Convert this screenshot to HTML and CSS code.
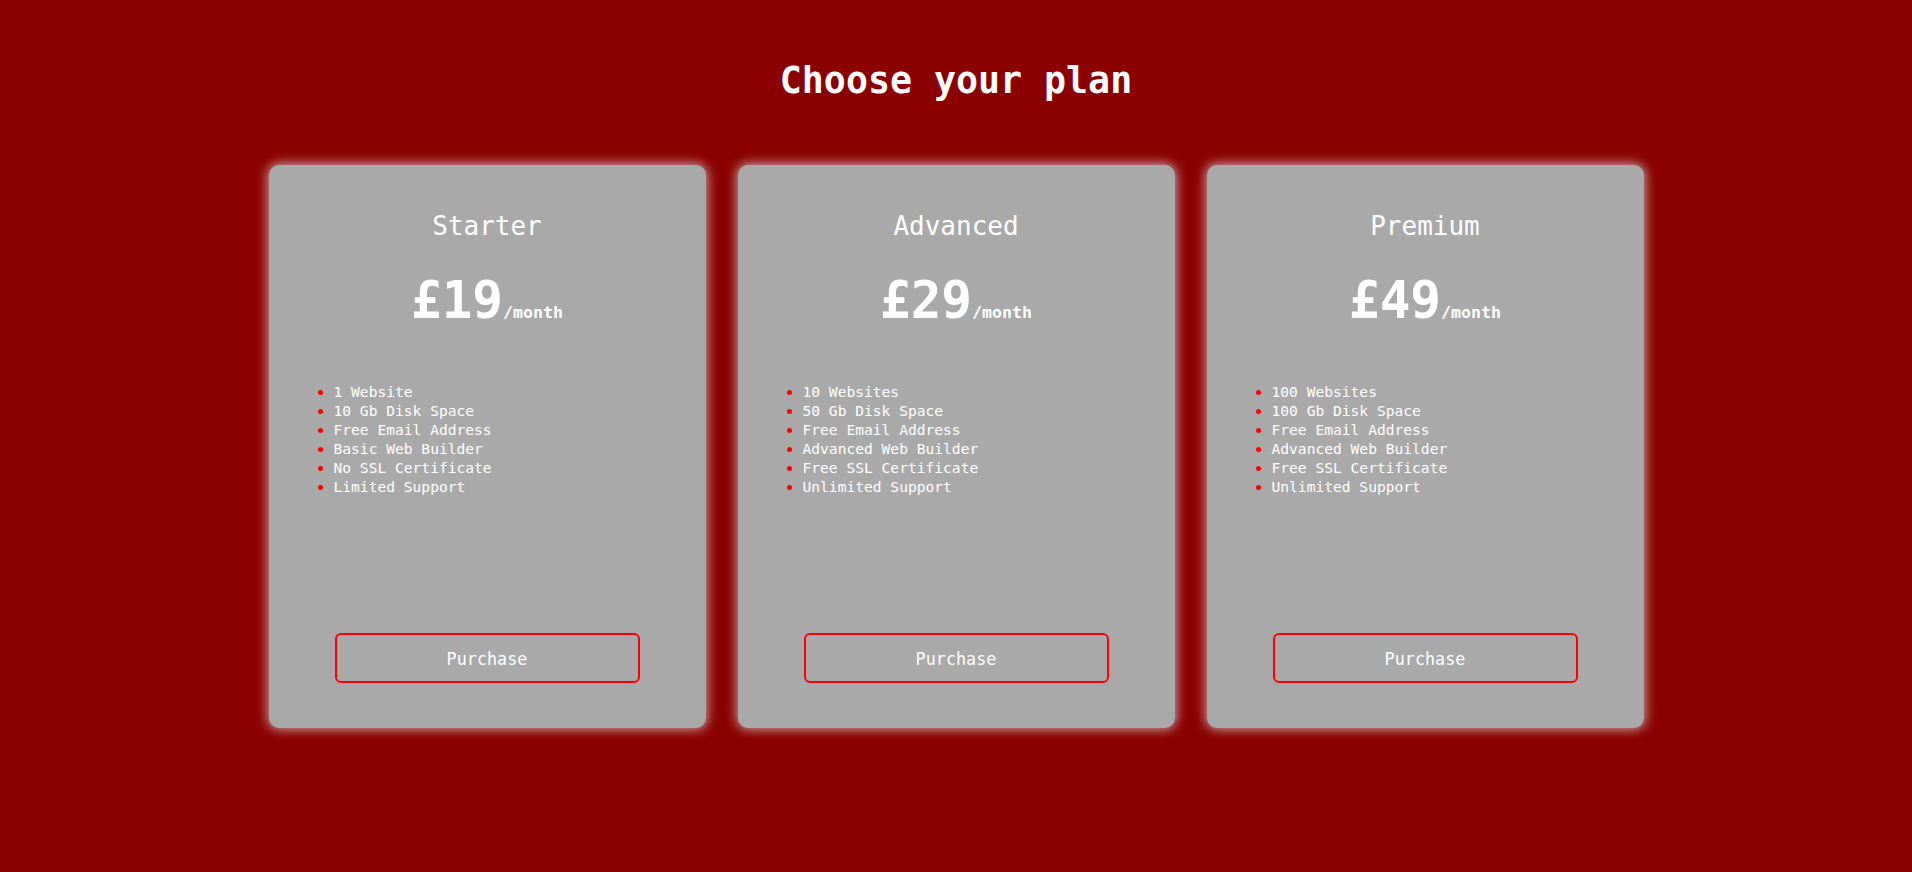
FILE: index.html
```html
<!DOCTYPE html>
<html lang="en">
<head>
<meta charset="utf-8">
<title>Choose your plan</title>
<link rel="stylesheet" href="styles.css">
</head>
<body>
<main class="page">
  <h1 class="title">Choose your plan</h1>
  <section class="plans">
    <article class="card">
      <h2 class="plan-name">Starter</h2>
      <p class="price">£19<span class="per">/month</span></p>
      <ul class="features">
        <li>1 Website</li>
        <li>10 Gb Disk Space</li>
        <li>Free Email Address</li>
        <li>Basic Web Builder</li>
        <li>No SSL Certificate</li>
        <li>Limited Support</li>
      </ul>
      <button class="buy">Purchase</button>
    </article>
    <article class="card">
      <h2 class="plan-name">Advanced</h2>
      <p class="price">£29<span class="per">/month</span></p>
      <ul class="features">
        <li>10 Websites</li>
        <li>50 Gb Disk Space</li>
        <li>Free Email Address</li>
        <li>Advanced Web Builder</li>
        <li>Free SSL Certificate</li>
        <li>Unlimited Support</li>
      </ul>
      <button class="buy">Purchase</button>
    </article>
    <article class="card">
      <h2 class="plan-name">Premium</h2>
      <p class="price">£49<span class="per">/month</span></p>
      <ul class="features">
        <li>100 Websites</li>
        <li>100 Gb Disk Space</li>
        <li>Free Email Address</li>
        <li>Advanced Web Builder</li>
        <li>Free SSL Certificate</li>
        <li>Unlimited Support</li>
      </ul>
      <button class="buy">Purchase</button>
    </article>
  </section>
</main>
</body>
</html>
```
FILE: styles.css
```css
html, body {
  margin: 0;
  padding: 0;
  height: 100%;
}
body {
  background: #8b0000;
  color: #ffffff;
  font-family: "DejaVu Sans Mono", "Liberation Mono", monospace;
}
.page {
  padding-top: 60px;
  display: flex;
  flex-direction: column;
  align-items: center;
}
.title {
  margin: 0;
  font-size: 36.6px;
  line-height: 42px;
  font-weight: bold;
  text-align: center;
}
.plans {
  margin-top: 63px;
  display: flex;
  gap: 32px;
  justify-content: center;
}
.card {
  width: 437px;
  height: 563px;
  box-sizing: border-box;
  background: #a9a9a9;
  border-radius: 10px;
  box-shadow: 0 0 12px 1px rgba(210, 210, 210, 0.85);
  padding: 46px 0 45px;
  display: flex;
  flex-direction: column;
  align-items: center;
}
.plan-name {
  margin: 0;
  font-size: 26px;
  line-height: 30px;
  font-weight: normal;
}
.price {
  margin: 32px 0 0;
  font-size: 51px;
  line-height: 56px;
  font-weight: bold;
}
.per {
  font-size: 16.6px;
  line-height: 1;
}
.features {
  align-self: stretch;
  margin: 53px 0 0;
  padding: 0 0 0 65px;
  font-size: 14.6px;
  line-height: 19px;
}
.features li::marker {
  color: #ff0000;
}
.buy {
  margin-top: auto;
  width: 305px;
  height: 50px;
  padding-top: 2px;
  background: transparent;
  border: 2px solid #ff0000;
  border-radius: 6px;
  color: #ffffff;
  font-family: "DejaVu Sans Mono", "Liberation Mono", monospace;
  font-size: 16.8px;
  cursor: pointer;
}
```
